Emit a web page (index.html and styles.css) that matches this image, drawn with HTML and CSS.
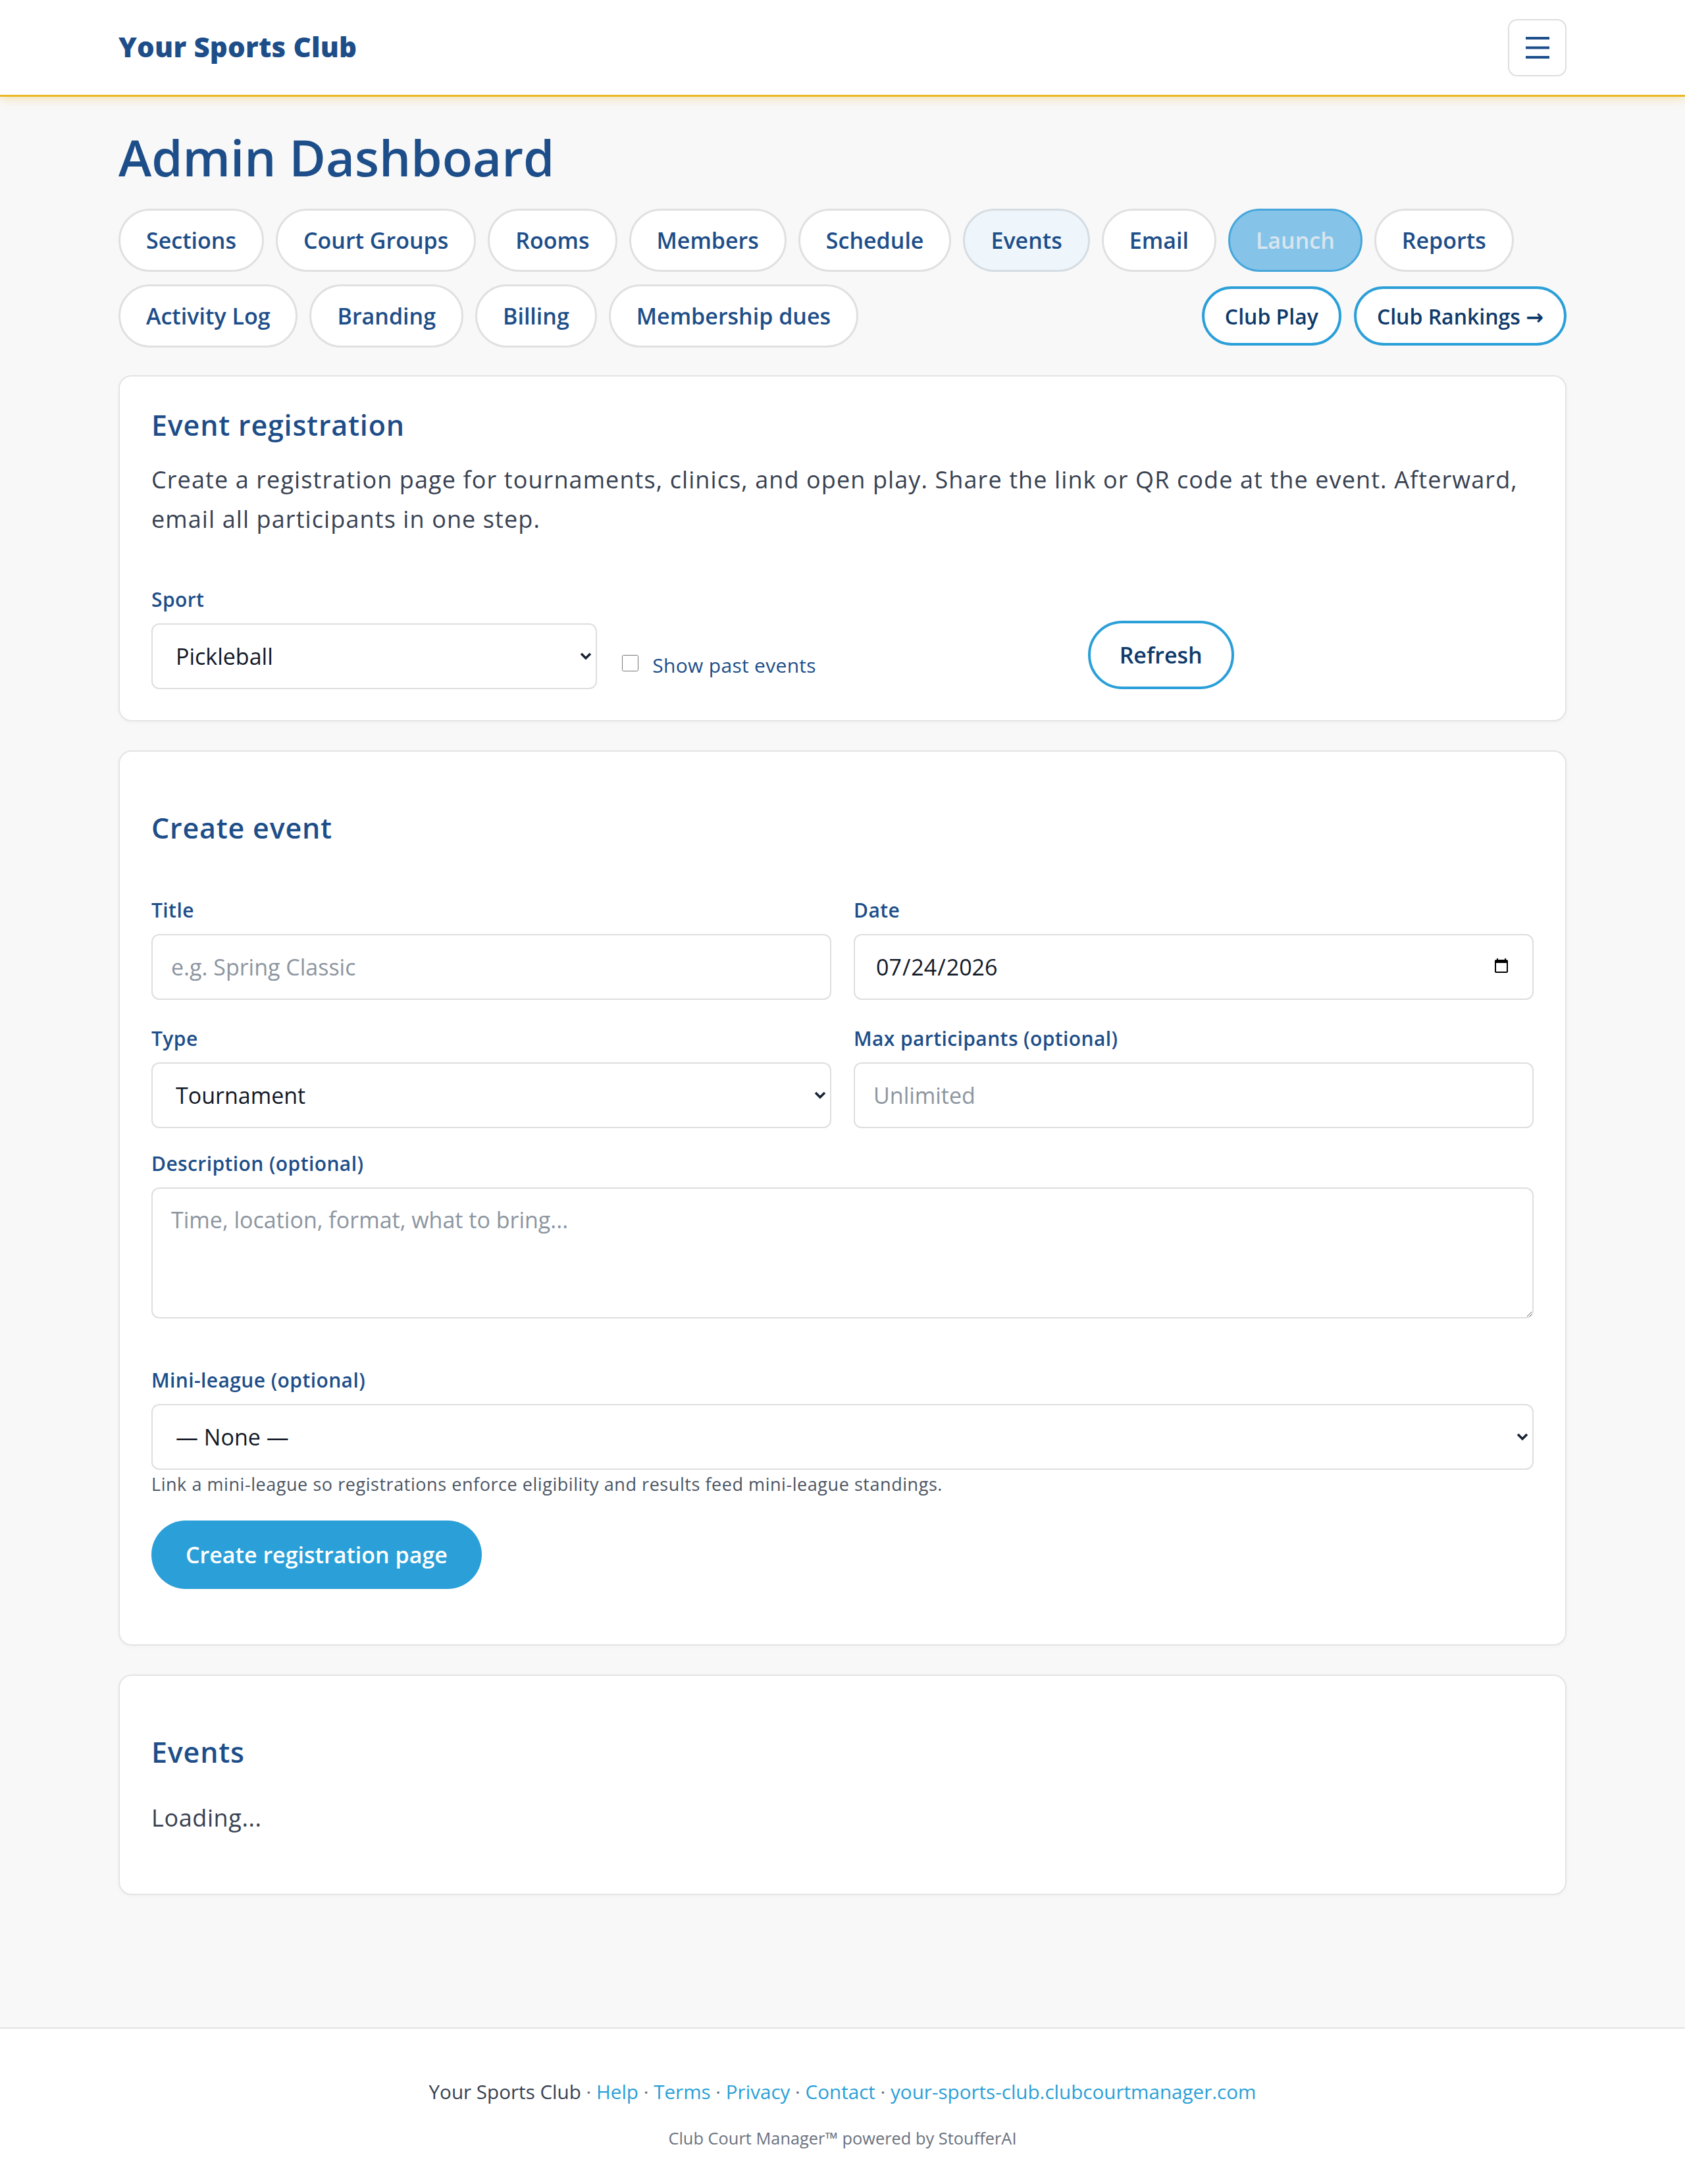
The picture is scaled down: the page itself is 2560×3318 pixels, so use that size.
FILE: index.html
```html
<!DOCTYPE html>
<html lang="en">
<head>
<meta charset="utf-8">
<title>Admin Dashboard · Your Sports Club</title>
<link rel="stylesheet" href="styles.css">
</head>
<body>
<header class="topbar">
  <div class="topbar-inner">
    <a class="brand" href="#">Your Sports Club</a>
    <button class="menu-btn" type="button" aria-label="Open menu">
      <svg width="36" height="33" viewBox="0 0 36 33" aria-hidden="true"><path d="M0 2h36M0 16.5h36M0 31h36" stroke="#1d4e89" stroke-width="4"/></svg>
    </button>
  </div>
</header>

<main class="page">
  <h1 class="page-title">Admin Dashboard</h1>

  <nav class="tabs">
    <div class="tab-row">
      <a class="tab" href="#">Sections</a>
      <a class="tab" href="#">Court Groups</a>
      <a class="tab" href="#">Rooms</a>
      <a class="tab" href="#">Members</a>
      <a class="tab" href="#">Schedule</a>
      <a class="tab is-current" href="#">Events</a>
      <a class="tab" href="#">Email</a>
      <a class="tab is-launch" href="#">Launch</a>
      <a class="tab" href="#">Reports</a>
    </div>
    <div class="tab-row">
      <a class="tab" href="#">Activity Log</a>
      <a class="tab" href="#">Branding</a>
      <a class="tab" href="#">Billing</a>
      <a class="tab" href="#">Membership dues</a>
      <div class="tab-actions">
        <a class="btn-outline" href="#">Club Play</a>
        <a class="btn-outline" href="#">Club Rankings →</a>
      </div>
    </div>
  </nav>

  <section class="card card-first">
    <h2 class="card-title">Event registration</h2>
    <p class="card-intro">Create a registration page for tournaments, clinics, and open play. Share the link or QR code at the event. Afterward,<br>email all participants in one step.</p>
    <div class="filter-grid">
      <div class="field">
        <label class="field-label" for="sport">Sport</label>
        <div class="select-wrap">
          <select id="sport" class="control select">
            <option>Pickleball</option>
          </select>
          <svg class="chevron" width="18" height="12" viewBox="0 0 18 12" aria-hidden="true"><path d="M2 2l7 7 7-7" fill="none" stroke="#1a2333" stroke-width="3.6"/></svg>
        </div>
      </div>
      <label class="check">
        <input type="checkbox">
        <span>Show past events</span>
      </label>
      <div class="refresh-cell">
        <button class="btn-outline btn-lg" type="button">Refresh</button>
      </div>
    </div>
  </section>

  <section class="card">
    <h2 class="card-title section-title">Create event</h2>
    <div class="form-grid">
      <div class="field">
        <label class="field-label" for="title">Title</label>
        <input id="title" class="control" type="text" placeholder="e.g. Spring Classic">
      </div>
      <div class="field">
        <label class="field-label" for="date">Date</label>
        <input id="date" class="control date" type="date" value="2026-07-24">
      </div>
      <div class="field">
        <label class="field-label" for="type">Type</label>
        <div class="select-wrap">
          <select id="type" class="control select">
            <option>Tournament</option>
          </select>
          <svg class="chevron" width="18" height="12" viewBox="0 0 18 12" aria-hidden="true"><path d="M2 2l7 7 7-7" fill="none" stroke="#1a2333" stroke-width="3.6"/></svg>
        </div>
      </div>
      <div class="field">
        <label class="field-label" for="max">Max participants (optional)</label>
        <input id="max" class="control" type="text" placeholder="Unlimited">
      </div>
    </div>

    <div class="field field-desc">
      <label class="field-label" for="desc">Description (optional)</label>
      <textarea id="desc" class="control textarea" placeholder="Time, location, format, what to bring..."></textarea>
    </div>

    <div class="field field-league">
      <label class="field-label" for="league">Mini-league (optional)</label>
      <div class="select-wrap">
        <select id="league" class="control select">
          <option>— None —</option>
        </select>
        <svg class="chevron" width="18" height="12" viewBox="0 0 18 12" aria-hidden="true"><path d="M2 2l7 7 7-7" fill="none" stroke="#1a2333" stroke-width="3.6"/></svg>
      </div>
      <p class="help">Link a mini-league so registrations enforce eligibility and results feed mini-league standings.</p>
    </div>

    <button class="btn-primary" type="button">Create registration page</button>
  </section>

  <section class="card">
    <h2 class="card-title section-title">Events</h2>
    <p class="loading">Loading...</p>
  </section>
</main>

<footer class="site-footer">
  <p class="footer-links">Your Sports Club <span class="sep">·</span> <a href="#">Help</a> <span class="sep">·</span> <a href="#">Terms</a> <span class="sep">·</span> <a href="#">Privacy</a> <span class="sep">·</span> <a href="#">Contact</a> <span class="sep">·</span> <a href="#">your-sports-club.clubcourtmanager.com</a></p>
  <p class="footer-credit">Club Court Manager™ powered by StoufferAI</p>
</footer>
</body>
</html>
```

FILE: styles.css
```css
* {
  box-sizing: border-box;
}

html,
body {
  margin: 0;
  padding: 0;
}

body {
  font-family: "Open Sans", "Noto Sans", "DejaVu Sans", sans-serif;
  background: #f8f8f8;
  color: #374151;
  min-height: 100vh;
  display: flex;
  flex-direction: column;
}

/* ---------- Top bar ---------- */
.topbar {
  background: #ffffff;
  height: 147px;
  border-bottom: 3px solid #e9b824;
  box-shadow: 0 3px 14px rgba(233, 184, 36, 0.35);
  position: relative;
  z-index: 1;
}

.topbar-inner {
  max-width: 2200px;
  height: 100%;
  margin: 0 auto;
  display: flex;
  align-items: center;
  justify-content: space-between;
}

.brand {
  font-size: 42px;
  font-weight: 800;
  color: #1d4e89;
  text-decoration: none;
  letter-spacing: 0.2px;
  margin-top: -3px;
}

.menu-btn {
  width: 89px;
  height: 87px;
  padding: 0;
  border: 2px solid #dedede;
  border-radius: 14px;
  background: #ffffff;
  display: flex;
  align-items: center;
  justify-content: center;
}

/* ---------- Page ---------- */
.page {
  flex: 1 0 auto;
  width: 100%;
  max-width: 2200px;
  margin: 0 auto;
  padding: 46px 0 60px;
}

.page-title {
  margin: 0;
  font-size: 76px;
  line-height: 91px;
  font-weight: 600;
  color: #1d4e89;
  letter-spacing: 0;
}

/* ---------- Tabs ---------- */
.tabs {
  margin-top: 33px;
  display: flex;
  flex-direction: column;
  gap: 19px;
}

.tab-row {
  display: flex;
  align-items: center;
  gap: 18px;
}

.tab {
  height: 96px;
  padding: 0 39px;
  border: 3px solid #e0e0e0;
  border-radius: 48px;
  background: #ffffff;
  color: #1d4e89;
  font-size: 34px;
  font-weight: 600;
  display: inline-flex;
  align-items: center;
  text-decoration: none;
}

.tab.is-current {
  background: #eef6fb;
  border-color: #d5dde3;
}

.tab.is-launch {
  background: #85c4e8;
  border-color: #46a6db;
  color: #d8e5ef;
}

.tab-actions {
  margin-left: auto;
  display: flex;
  align-items: center;
  gap: 19px;
}

.btn-outline {
  height: 90px;
  padding: 0 31px;
  border: 4px solid #2a9fd8;
  border-radius: 48px;
  background: #ffffff;
  color: #0e3a6a;
  font-family: inherit;
  font-size: 32px;
  font-weight: 600;
  display: inline-flex;
  align-items: center;
  text-decoration: none;
}

.btn-lg {
  height: 104px;
  padding: 0 44px;
  font-size: 34px;
  border-radius: 52px;
}

/* ---------- Cards ---------- */
.card {
  margin-top: 44px;
  background: #ffffff;
  border: 2px solid #e4e4e4;
  border-radius: 20px;
  padding: 46px 48px 47px;
  box-shadow: 0 2px 6px rgba(0, 0, 0, 0.03);
}

.card-first {
  margin-top: 42px;
}

.card-title {
  margin: 0 0 26px;
  font-size: 43px;
  line-height: 55px;
  font-weight: 600;
  color: #1d4e89;
  letter-spacing: 0.8px;
}

.section-title {
  margin-top: 42px;
}

.card-intro {
  margin: 0 0 70px;
  font-size: 36px;
  line-height: 59.5px;
  letter-spacing: 1.1px;
  color: #374151;
}

/* ---------- Form ---------- */
.filter-grid {
  display: grid;
  grid-template-columns: repeat(3, 1fr);
  column-gap: 34px;
  align-items: end;
}

.field-label {
  display: block;
  margin-bottom: 14px;
  font-size: 30px;
  line-height: 45px;
  font-weight: 600;
  letter-spacing: 0.4px;
  color: #1d4e89;
}

.control {
  display: block;
  width: 100%;
  height: 100px;
  margin: 0;
  padding: 0 28px;
  border: 2px solid #dedede;
  border-radius: 12px;
  background: #ffffff;
  font-family: inherit;
  font-size: 34px;
  color: #111827;
  outline: none;
}

.control::placeholder {
  color: #8c959f;
}

.select {
  appearance: none;
  -webkit-appearance: none;
  padding: 0 60px 0 35px;
}

.date {
  padding: 0 34px 0 31px;
}

.date::-webkit-calendar-picker-indicator {
  width: 26px;
  height: 28px;
  padding: 0;
  margin: 0;
}

.select-wrap {
  position: relative;
}

.chevron {
  position: absolute;
  right: 8px;
  top: 50%;
  transform: translateY(-50%);
  pointer-events: none;
}

.check {
  display: flex;
  align-items: center;
  gap: 21px;
  padding-bottom: 14px;
  font-size: 30px;
  line-height: 45px;
  letter-spacing: 0.3px;
  color: #1d4e89;
}

.check input {
  width: 25px;
  height: 25px;
  margin: 0 0 6px 4px;
}

.refresh-cell {
  display: flex;
  justify-content: flex-start;
}

.form-grid {
  display: grid;
  grid-template-columns: 1fr 1fr;
  column-gap: 34px;
  row-gap: 36px;
  margin-top: 75px;
}

.field-desc {
  margin-top: 31px;
}

.textarea {
  height: 199px;
  padding: 22px 28px;
  line-height: 51px;
  resize: vertical;
}

.field-league {
  margin-top: 71px;
}

.help {
  margin: 2px 0 0;
  font-size: 27px;
  line-height: 40px;
  letter-spacing: 0.55px;
  color: #4b5563;
}

.btn-primary {
  display: inline-flex;
  align-items: center;
  height: 104px;
  margin: 35px 0 37px;
  padding: 0 52px;
  border: none;
  border-radius: 52px;
  background: #2a9fd8;
  color: #ffffff;
  font-family: inherit;
  font-size: 34px;
  font-weight: 600;
}

.loading {
  margin: 43px 0 38px;
  font-size: 36px;
  line-height: 59.5px;
  letter-spacing: 0.6px;
  color: #374151;
}

/* ---------- Footer ---------- */
.site-footer {
  background: #ffffff;
  border-top: 2px solid #e3e3e3;
  padding: 74px 0 51px;
  text-align: center;
}

.footer-links {
  margin: 0;
  font-size: 29.6px;
  line-height: 44px;
  color: #374151;
}

.footer-links a {
  color: #2a9fd8;
  font-weight: 500;
  text-decoration: none;
}

.sep {
  color: #6b7280;
}

.footer-credit {
  margin: 29px 0 0;
  font-size: 25.4px;
  line-height: 38px;
  color: #6b7280;
}
```
